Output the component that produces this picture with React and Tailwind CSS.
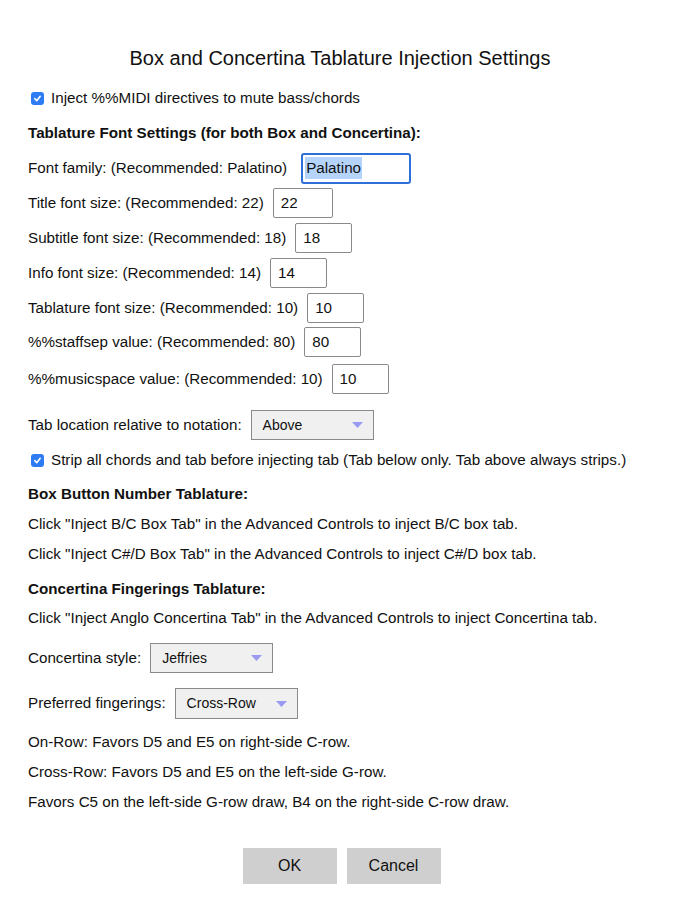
import React from 'react';

const font = { fontFamily: '"Liberation Sans", Arial, Helvetica, sans-serif' };

function Check() {
  return (
    <span className="inline-flex h-[13px] w-[13px] shrink-0 items-center justify-center rounded-[3px] bg-[#2d7cf4]">
      <svg width="9" height="9" viewBox="0 0 10 10" fill="none">
        <path d="M2 5.2 L4.2 7.4 L8 2.6" stroke="white" strokeWidth="1.8" strokeLinecap="round" strokeLinejoin="round" />
      </svg>
    </span>
  );
}

function NumRow({ label, value, w = 'w-[57px]', className = '' }) {
  return (
    <div className={`flex h-[30px] items-center ${className}`}>
      <span>{label}</span>
      <div className={`ml-[9px] flex h-[30px] ${w} items-center rounded-[2px] border border-[#8a8a8a] bg-white pl-[7px]`}>
        {value}
      </div>
    </div>
  );
}

function Select({ value, className = '' }) {
  return (
    <div className={`ml-[9px] flex h-[30px] w-[123px] items-center justify-between border border-[#8a8a8a] bg-[#f0f0f0] pl-[11px] pr-[10px] text-[14px] ${className}`}>
      <span>{value}</span>
      <svg width="11" height="6" viewBox="0 0 11 6">
        <path d="M0 0 H11 L5.5 6 Z" fill="#9a9af2" />
      </svg>
    </div>
  );
}

export default function App() {
  return (
    <div className="min-h-[912px] w-[680px] bg-white px-[28px] pt-[46px] text-[15.2px] text-[#111]" style={font}>
      <div className="h-[24px] text-center text-[20px] leading-[24px]">
        Box and Concertina Tablature Injection Settings
      </div>

      <div className="mt-[18px] flex h-[20px] items-center gap-[7px] pl-[3px]">
        <Check />
        <span>Inject %%MIDI directives to mute bass/chords</span>
      </div>

      <div className="mt-[15px] h-[20px] font-bold leading-[20px]">
        Tablature Font Settings (for both Box and Concertina):
      </div>

      <div className="mt-[10px] flex h-[30px] items-center">
        <span>Font family: (Recommended: Palatino)</span>
        <div className="ml-[14px] flex h-[31px] w-[110px] items-center rounded-[3px] border-2 border-[#2f6fd8] bg-white pl-[2px]">
          <span className="bg-[#b5d4fb] px-[1px]">Palatino</span>
        </div>
      </div>
      <NumRow className="mt-[5px]" label="Title font size: (Recommended: 22)" value="22" w="w-[60px]" />
      <NumRow className="mt-[5px]" label="Subtitle font size: (Recommended: 18)" value="18" />
      <NumRow className="mt-[5px]" label="Info font size: (Recommended: 14)" value="14" />
      <NumRow className="mt-[5px]" label="Tablature font size: (Recommended: 10)" value="10" />
      <NumRow className="mt-[4px]" label="%%staffsep value: (Recommended: 80)" value="80" />
      <NumRow className="mt-[7px]" label="%%musicspace value: (Recommended: 10)" value="10" />

      <div className="mt-[16px] flex h-[30px] items-center">
        <span>Tab location relative to notation:</span>
        <Select value="Above" />
      </div>

      <div className="mt-[10px] flex h-[20px] items-center gap-[7px] pl-[3px]">
        <Check />
        <span>Strip all chords and tab before injecting tab (Tab below only. Tab above always strips.)</span>
      </div>

      <div className="mt-[14px] h-[20px] font-bold leading-[20px]">Box Button Number Tablature:</div>
      <div className="mt-[10px] h-[20px] leading-[20px]">Click "Inject B/C Box Tab" in the Advanced Controls to inject B/C box tab.</div>
      <div className="mt-[10px] h-[20px] leading-[20px]">Click "Inject C#/D Box Tab" in the Advanced Controls to inject C#/D box tab.</div>

      <div className="mt-[15px] h-[20px] font-bold leading-[20px]">Concertina Fingerings Tablature:</div>
      <div className="mt-[9px] h-[20px] leading-[20px]">Click "Inject Anglo Concertina Tab" in the Advanced Controls to inject Concertina tab.</div>

      <div className="mt-[15px] flex h-[30px] items-center">
        <span>Concertina style:</span>
        <Select value="Jeffries" />
      </div>
      <div className="mt-[15px] flex h-[31px] items-center">
        <span>Preferred fingerings:</span>
        <Select value="Cross-Row" className="h-[31px]" />
      </div>

      <div className="mt-[13px] h-[20px] leading-[20px]">On-Row: Favors D5 and E5 on right-side C-row.</div>
      <div className="mt-[10px] h-[20px] leading-[20px]">Cross-Row: Favors D5 and E5 on the left-side G-row.</div>
      <div className="mt-[10px] h-[20px] leading-[20px]">Favors C5 on the left-side G-row draw, B4 on the right-side C-row draw.</div>

      <div className="mt-[36px] flex justify-center gap-[10px] pl-[3px]">
        <button className="h-[36px] w-[94px] bg-[#cfcfcf] text-[16px]">OK</button>
        <button className="h-[36px] w-[94px] bg-[#cfcfcf] text-[16px]">Cancel</button>
      </div>
    </div>
  );
}
